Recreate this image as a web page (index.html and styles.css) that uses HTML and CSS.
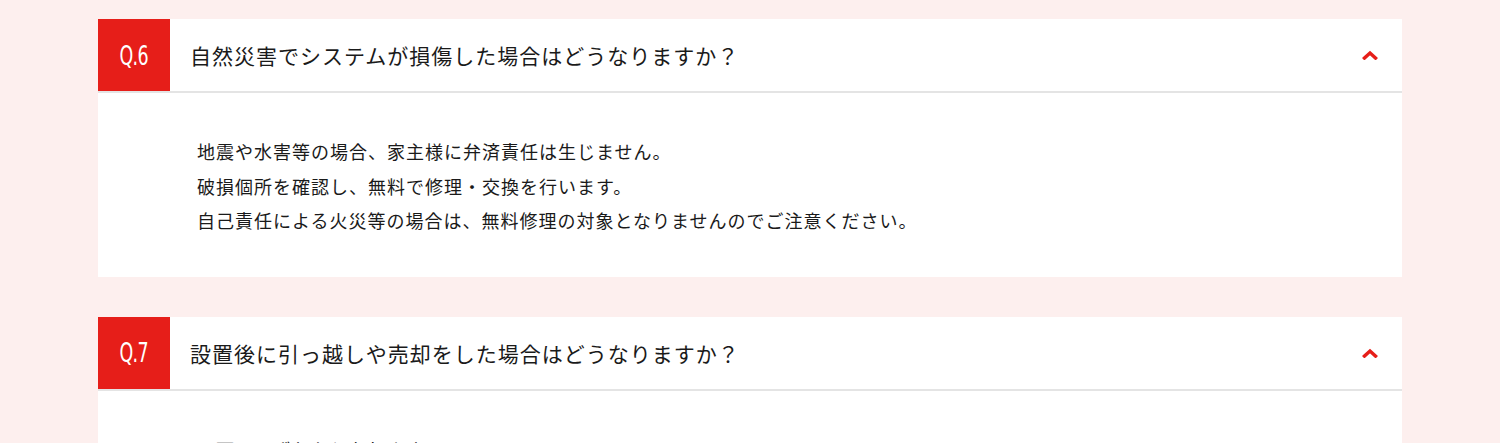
FILE: index.html
```html
<!DOCTYPE html>
<html lang="ja">
<head>
  <meta charset="UTF-8" />
  <title>よくある質問</title>
  <link rel="stylesheet" href="styles.css">
</head>
<body>

<div class="faq">
  <div class="faq-item">
    <div class="faq-q">
      <span class="faq-num"><span>Q.6</span></span>
      <span class="faq-title">自然災害でシステムが損傷した場合はどうなりますか？</span>
      <svg class="faq-toggle" viewBox="0 0 16 10" width="16" height="10">
        <polyline points="2.5,8 8,3 13.5,8" />
      </svg>
    </div>
    <div class="faq-a">
      <p>地震や水害等の場合、家主様に弁済責任は生じません。<br>
      破損個所を確認し、無料で修理・交換を行います。<br>
      自己責任による火災等の場合は、無料修理の対象となりませんのでご注意ください。</p>
    </div>
  </div>

  <div class="faq-item">
    <div class="faq-q">
      <span class="faq-num"><span>Q.7</span></span>
      <span class="faq-title">設置後に引っ越しや売却をした場合はどうなりますか？</span>
      <svg class="faq-toggle" viewBox="0 0 16 10" width="16" height="10">
        <polyline points="2.5,8 8,3 13.5,8" />
      </svg>
    </div>
    <div class="faq-a">
      <p>以下のいずれかとなります。<br>
      設置先の新しい所有者様へ契約を引き継ぎます。<br>
      契約を解除する場合は所定の手続きが必要です。</p>
    </div>
  </div>
</div>

</body>
</html>
```

FILE: styles.css
```css
body {
  margin: 0;
  background: #fdefee;
  font-family: "Noto Sans CJK JP", "Noto Sans", sans-serif;
  color: #1a1a1a;
}
.faq {
  padding: 19px 98px 0 98px;
  display: flex;
  flex-direction: column;
  gap: 40px;
}
.faq-item {
  background: #fff;
}
.faq-q {
  display: flex;
  align-items: center;
  height: 72px;
  border-bottom: 2px solid #e4e4e4;
}
.faq-num {
  width: 72px;
  height: 72px;
  flex: none;
  background: #e61e19;
  color: #fff;
  display: flex;
  align-items: center;
  justify-content: center;
  font-family: "DejaVu Sans", "Liberation Sans", sans-serif;
  font-stretch: condensed;
  font-size: 27px;
}
.faq-num span {
  display: inline-block;
  transform: scaleX(0.72);
  letter-spacing: -1px;
}
.faq-title {
  flex: 1;
  margin-left: 20px;
  font-size: 21px;
  letter-spacing: 1px;
}
.faq-toggle {
  margin-right: 24px;
  fill: none;
  stroke: #e61e19;
  stroke-width: 3.5;
  stroke-linecap: square;
}
.faq-a {
  padding: 41px 40px 39px 99px;
}
.faq-a p {
  margin: 0;
  font-size: 18px;
  line-height: 34.5px;
  letter-spacing: 1px;
}
```
